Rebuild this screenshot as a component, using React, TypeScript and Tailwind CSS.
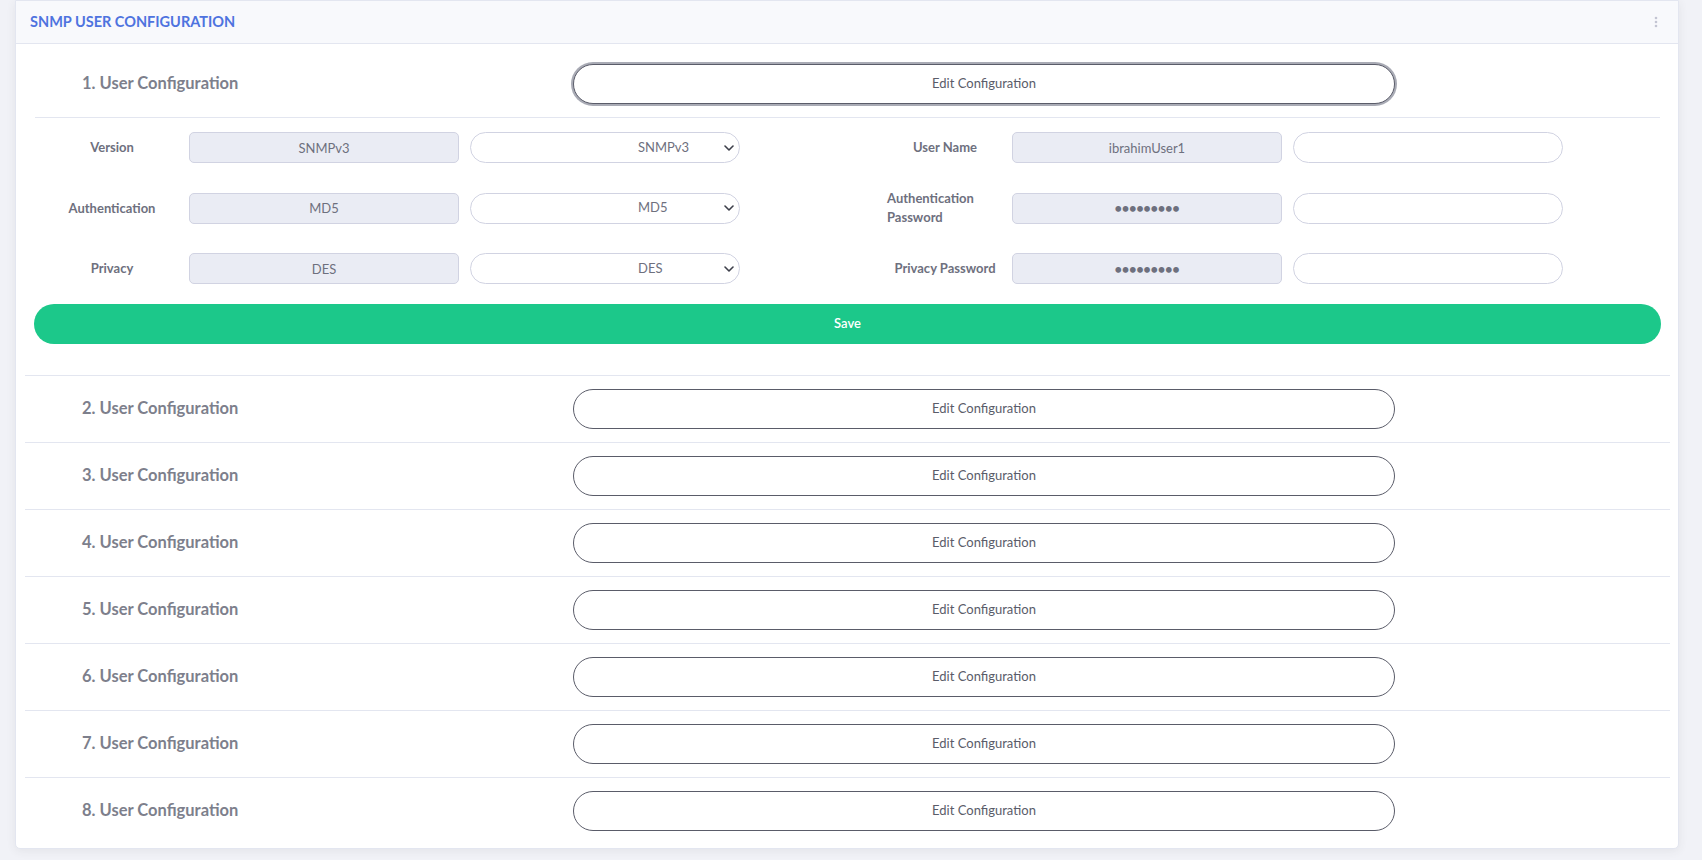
import React from 'react'

const labelCls = "text-[13px] font-bold text-[#6e707e] leading-[19px]"
const readCls = "w-[270px] h-full rounded-[5px] border border-[#d1d3e2] bg-[#eaecf4] text-center text-[13px] text-[#6e707e] outline-none"
const pillCls = "w-[270px] h-full rounded-full border border-[#d1d3e2] bg-white text-[13px] text-[#6e707e] outline-none"

function Select ({ value }: { value: string }) {
  return (
    <div className="relative ml-[11px] w-[270px] h-full">
      <select
        defaultValue={value}
        className={`${pillCls} appearance-none pl-[167px]`}
      >
        <option>{value}</option>
      </select>
      <svg className="pointer-events-none absolute right-[6px] top-1/2 -translate-y-1/2" width="10" height="6" viewBox="0 0 10 6">
        <path d="M1 1l4 4 4-4" fill="none" stroke="#3d3f4a" strokeWidth="1.6" strokeLinecap="round" strokeLinejoin="round"/>
      </svg>
    </div>
  )
}

function FormRow (
  { left, leftValue, right, rightValue, secret }:
  { left: string, leftValue: string, right: React.ReactNode, rightValue: string, secret?: boolean }
) {
  return (
    <div className="flex items-center h-[31px]">
      <div className="w-[154px] flex justify-center">
        <div className={labelCls}>{left}</div>
      </div>
      <input readOnly defaultValue={leftValue} className={readCls}/>
      <Select value={leftValue}/>
      <div className="ml-[138px] w-[134px] px-[9px] flex justify-center">
        <div className={labelCls}>{right}</div>
      </div>
      <input
        readOnly
        defaultValue={rightValue}
        className={`${readCls} ${secret ? 'tracking-[-0.3px] text-[12px] font-bold text-[#5a5c69]' : ''}`}
      />
      <input className={`${pillCls} ml-[11px] px-3`}/>
    </div>
  )
}

function UserRow ({ n, focused, divider }: { n: number, focused?: boolean, divider?: boolean }) {
  return (
    <div className={`flex items-center ${divider ? 'border-t border-[#e3e6f0] py-[13px]' : 'pt-[20px] pb-[13px]'}`}>
      <div className="w-[548px] pl-[57px] pb-[2px] text-[16.5px] font-bold text-[#7d7f8c]">
        {n}. User Configuration
      </div>
      <button
        className={`w-[822px] h-[40px] rounded-full border border-[#5a5c69] bg-white text-[13px] text-[#5a5c69]
        ${focused ? 'shadow-[0_0_0_2px_#a9abb5]' : ''}`}
      >
        Edit Configuration
      </button>
    </div>
  )
}

export default function App () {
  return (
    <div className="min-h-screen bg-[#f1f2f7] font-['Lato','Open_Sans',sans-serif]">
      <div className="ml-[15px] w-[1664px] bg-white border border-[#e3e6f0] rounded-b-[5px] shadow-[0_2px_10px_rgba(58,59,69,0.08)]">
        <div className="h-[43px] flex items-center justify-between pl-[14px] pr-[20px] bg-[#f8f9fc] border-b border-[#e3e6f0]">
          <h6 className="text-[14.5px] font-bold text-[#4e73df]">SNMP USER CONFIGURATION</h6>
          <svg width="4" height="12" viewBox="0 0 4 12">
            <circle cx="2" cy="2" r="1.3" fill="#c3c5d3"/>
            <circle cx="2" cy="6" r="1.3" fill="#c3c5d3"/>
            <circle cx="2" cy="10" r="1.3" fill="#c3c5d3"/>
          </svg>
        </div>

        <div className="pl-[9px] pr-[8px] pb-[4px]">
          <UserRow n={1} focused/>
          <div className="mx-[10px] border-t border-[#e3e6f0]"/>
          <div className="mx-[10px] pt-[14px] pb-[31px]">
            <div className="flex flex-col gap-[29.5px]">
              <FormRow left="Version" leftValue="SNMPv3" right="User Name" rightValue="ibrahimUser1"/>
              <FormRow
                left="Authentication"
                leftValue="MD5"
                right={<>Authentication Password</>}
                rightValue="•••••••••"
                secret
              />
              <FormRow left="Privacy" leftValue="DES" right="Privacy Password" rightValue="•••••••••" secret/>
            </div>
            <button className="mt-[20px] -mx-px w-[calc(100%+2px)] h-[40px] rounded-full bg-[#1cc88a] text-white text-[13px] font-semibold">
              Save
            </button>
          </div>
          {[2, 3, 4, 5, 6, 7, 8].map(n => <UserRow key={n} n={n} divider/>)}
        </div>
      </div>
    </div>
  )
}
